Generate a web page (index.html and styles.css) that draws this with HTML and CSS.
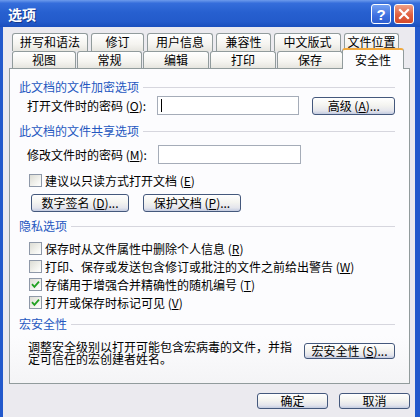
FILE: index.html
```html
<!DOCTYPE html>
<html lang="zh-CN">
<head>
    <meta charset="UTF-8">
    <title>选项</title>
    <link rel="stylesheet" href="styles.css">
</head>
<body>
    <div class="window">
        <div class="titlebar">
            <span class="title">选项</span>
            <div class="caption-buttons">
                <span class="cap-btn help">?</span>
                <span class="cap-btn close">
                    <svg width="12" height="12" viewBox="0 0 12 12"><path d="M2 2 L10 10 M10 2 L2 10" stroke="#fff" stroke-width="2.2" stroke-linecap="square"/></svg>
                </span>
            </div>
        </div>

        <div class="client">
            <div class="tab-row row-back">
                <div class="tab">拼写和语法</div>
                <div class="tab">修订</div>
                <div class="tab">用户信息</div>
                <div class="tab">兼容性</div>
                <div class="tab">中文版式</div>
                <div class="tab">文件位置</div>
            </div>
            <div class="tab-row row-front">
                <div class="tab">视图</div>
                <div class="tab">常规</div>
                <div class="tab">编辑</div>
                <div class="tab">打印</div>
                <div class="tab">保存</div>
                <div class="tab active">安全性</div>
            </div>

            <div class="panel">
                <div class="group-label">此文档的文件加密选项</div>
                <div class="field-row first">
                    <span class="field-label">打开文件时的密码 (<u>O</u>):</span>
                    <span class="text-input"><span class="caret"></span></span>
                    <button class="btn btn-advanced">高级 (<u>A</u>)...</button>
                </div>

                <div class="group-label gap-top">此文档的文件共享选项</div>
                <div class="field-row second">
                    <span class="field-label">修改文件时的密码 (<u>M</u>):</span>
                    <span class="text-input"></span>
                </div>
                <div class="check-row single">
                    <span class="checkbox"></span>
                    <span>建议以只读方式打开文档 (<u>E</u>)</span>
                </div>
                <div class="button-row">
                    <button class="btn btn-wide">数字签名 (<u>D</u>)...</button>
                    <button class="btn btn-wide">保护文档 (<u>P</u>)...</button>
                </div>

                <div class="group-label privacy">隐私选项</div>
                <div class="check-list">
                    <div class="check-row">
                        <span class="checkbox"></span>
                        <span>保存时从文件属性中删除个人信息 (<u>R</u>)</span>
                    </div>
                    <div class="check-row">
                        <span class="checkbox"></span>
                        <span>打印、保存或发送包含修订或批注的文件之前给出警告 (<u>W</u>)</span>
                    </div>
                    <div class="check-row">
                        <span class="checkbox checked">
                            <svg width="9" height="9" viewBox="0 0 9 9"><path d="M1 4.2 L3.4 6.8 L8 1.6" fill="none" stroke="#21a121" stroke-width="1.8"/></svg>
                        </span>
                        <span>存储用于增强合并精确性的随机编号 (<u>T</u>)</span>
                    </div>
                    <div class="check-row">
                        <span class="checkbox checked">
                            <svg width="9" height="9" viewBox="0 0 9 9"><path d="M1 4.2 L3.4 6.8 L8 1.6" fill="none" stroke="#21a121" stroke-width="1.8"/></svg>
                        </span>
                        <span>打开或保存时标记可见 (<u>V</u>)</span>
                    </div>
                </div>

                <div class="group-label macro">宏安全性</div>
                <div class="macro-row">
                    <p class="macro-text">调整安全级别以打开可能包含宏病毒的文件，并指定可信任的宏创建者姓名。</p>
                    <button class="btn btn-macro">宏安全性 (<u>S</u>)...</button>
                </div>
            </div>

            <div class="footer">
                <button class="btn btn-footer">确定</button>
                <button class="btn btn-footer">取消</button>
            </div>
        </div>
    </div>
</body>
</html>
```

FILE: styles.css
```css
* {
    box-sizing: border-box;
}

body {
    margin: 0;
    font-family: "Noto Sans CJK SC", "Liberation Sans", sans-serif;
    font-size: 12px;
    color: #000000;
    background-color: #ffffff;
}

.window {
    width: 420px;
    height: 417px;
    display: flex;
    flex-direction: column;
    overflow: hidden;
}

.titlebar {
    height: 27px;
    display: flex;
    align-items: center;
    justify-content: space-between;
    padding: 0 6px 0 8px;
    background: linear-gradient(180deg, #6d9bec 0%, #356ddb 12%, #2760d0 45%, #235bcb 80%, #1a4fbd 100%);
}

.title {
    color: #ffffff;
    font-weight: bold;
    font-size: 14px;
    text-shadow: 1px 1px 0 #15388c;
}

.caption-buttons {
    display: flex;
    gap: 3px;
    margin-top: 1px;
}

.cap-btn {
    width: 20px;
    height: 20px;
    border: 1px solid #ffffff;
    border-radius: 3px;
    display: flex;
    align-items: center;
    justify-content: center;
    color: #ffffff;
}

.cap-btn.help {
    background: linear-gradient(180deg, #74a0f2, #3d6fe0 60%, #2f5fd0);
    font-family: "Liberation Sans", sans-serif;
    font-weight: bold;
    font-size: 15px;
}

.cap-btn.close {
    background: linear-gradient(180deg, #f0a088, #e06040 55%, #d44a2a);
}

.client {
    flex: 1;
    border-left: 3px solid #2359cc;
    border-right: 5px solid #2359cc;
    background-color: #ebeaef;
    padding: 6px 5px 0 6px;
}

.tab-row {
    display: grid;
    margin-left: 3px;
}

.row-back {
    grid-template-columns: 76px 53px 66px 55px 67px 55px;
    column-gap: 3px;
    height: 18px;
}

.row-front {
    grid-template-columns: 64px 65px 66px 66px 66px 58px;
    column-gap: 1px;
    height: 17px;
}

.tab {
    border: 1px solid #919b9c;
    border-bottom: none;
    border-radius: 3px 3px 0 0;
    background: linear-gradient(180deg, #ffffff, #f5f4f0 60%, #e6e5df);
    text-align: center;
    line-height: 16px;
}

.tab.active {
    position: relative;
    z-index: 1;
    margin: -3px -2px -1px;
    border-top: 2px solid #f2a93c;
    background: #fcfcfe;
    line-height: 19px;
}

.panel {
    height: 316px;
    border: 1px solid #919b9c;
    background: linear-gradient(180deg, #fcfcfe 85%, #f4f4f6);
    padding: 11px 14px 0 9px;
}

.group-label {
    display: flex;
    align-items: center;
    gap: 4px;
    height: 14px;
    line-height: 14px;
    color: #2457c0;
}

.group-label::after {
    content: "";
    flex: 1;
    height: 1px;
    background-color: #d6d6de;
}

.gap-top {
    margin-top: 9px;
}

.privacy {
    margin-top: 7px;
}

.macro {
    margin-top: 6px;
}

.field-row {
    display: flex;
    align-items: center;
    height: 19px;
    padding-left: 8px;
}

.field-row.first {
    margin-top: 2px;
}

.field-row.second {
    margin-top: 7px;
}

.field-label {
    width: 131px;
    white-space: nowrap;
}

.text-input {
    width: 143px;
    height: 19px;
    border: 1px solid #a5acb8;
    background-color: #ffffff;
    padding: 2px 0 0 3px;
}

.caret {
    display: block;
    width: 1px;
    height: 13px;
    background-color: #000000;
}

.btn {
    font-family: inherit;
    font-size: 12px;
    color: #000000;
    padding: 0;
    border: 1px solid #44587c;
    border-radius: 3px;
    background: linear-gradient(180deg, #ffffff, #f4f4f0 45%, #e4e5ec 80%, #c3cbe0);
    line-height: 14px;
    white-space: nowrap;
}

.btn-advanced {
    width: 83px;
    height: 18px;
    margin-left: 13px;
}

.check-row {
    display: flex;
    align-items: center;
    gap: 3px;
    height: 18px;
    padding-left: 10px;
    white-space: nowrap;
}

.check-row.single {
    margin-top: 7px;
}

.checkbox {
    width: 13px;
    height: 13px;
    border: 1px solid #8e98a8;
    background: linear-gradient(135deg, #dcdcd4, #f6f6f2 70%, #ffffff);
    display: flex;
    align-items: center;
    justify-content: center;
}

.button-row {
    display: flex;
    gap: 14px;
    margin-top: 5px;
    padding-left: 12px;
}

.btn-wide {
    width: 98px;
    height: 18px;
}

.check-list {
    margin-top: 6px;
}

.macro-row {
    display: flex;
    align-items: flex-start;
    margin-top: 10px;
    padding-left: 9px;
}

.macro-text {
    width: 266px;
    margin: 0;
    line-height: 12px;
}

.btn-macro {
    width: 91px;
    height: 16px;
    margin-left: auto;
    margin-top: 2px;
}

.footer {
    display: flex;
    justify-content: flex-end;
    gap: 11px;
    margin-top: 9px;
}

.btn-footer {
    width: 71px;
    height: 16px;
}
```
